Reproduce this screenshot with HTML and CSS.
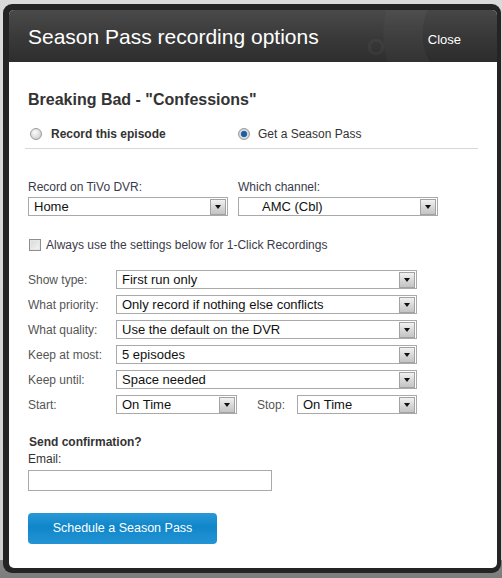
FILE: index.html
```html
<!DOCTYPE html>
<html>
<head>
<meta charset="utf-8">
<link rel="stylesheet" href="styles.css">
</head>
<body>
<div class="frame">
  <div class="dialog">
    <div class="header">
      <div class="title">Season Pass recording options</div>
      <div class="close">Close</div>
    </div>
    <div class="content">
      <h2 class="show">Breaking Bad - "Confessions"</h2>
      <div class="opts">
        <div class="opt opt1"><span class="radio"></span><span class="opt-label bold">Record this episode</span></div>
        <div class="opt"><span class="radio checked"></span><span class="opt-label">Get a Season Pass</span></div>
      </div>
      <div class="sep"></div>
      <div class="dvr">
        <div class="field">
          <div class="flabel">Record on TiVo DVR:</div>
          <div class="sel"><span class="sel-text">Home</span><span class="arrow"></span></div>
        </div>
        <div class="field">
          <div class="flabel">Which channel:</div>
          <div class="sel"><span class="sel-text indent">AMC (Cbl)</span><span class="arrow"></span></div>
        </div>
      </div>
      <div class="check-row"><span class="checkbox"></span><span class="check-label">Always use the settings below for 1-Click Recordings</span></div>
      <div class="form">
        <div class="rlabel">Show type:</div>
        <div class="sel"><span class="sel-text">First run only</span><span class="arrow"></span></div>
        <div class="rlabel">What priority:</div>
        <div class="sel"><span class="sel-text">Only record if nothing else conflicts</span><span class="arrow"></span></div>
        <div class="rlabel">What quality:</div>
        <div class="sel"><span class="sel-text">Use the default on the DVR</span><span class="arrow"></span></div>
        <div class="rlabel">Keep at most:</div>
        <div class="sel"><span class="sel-text">5 episodes</span><span class="arrow"></span></div>
        <div class="rlabel">Keep until:</div>
        <div class="sel"><span class="sel-text">Space needed</span><span class="arrow"></span></div>
        <div class="rlabel">Start:</div>
        <div class="startstop">
          <div class="sel small"><span class="sel-text">On Time</span><span class="arrow"></span></div>
          <div class="stop-label">Stop:</div>
          <div class="sel small2"><span class="sel-text">On Time</span><span class="arrow"></span></div>
        </div>
      </div>
      <div class="confirm">Send confirmation?</div>
      <div class="email-label">Email:</div>
      <div class="email"></div>
      <div class="button">Schedule a Season Pass</div>
    </div>
  </div>
</div>
</body>
</html>
```

FILE: styles.css
```css
html, body {
  margin: 0;
  padding: 0;
}
body {
  width: 502px;
  height: 578px;
  overflow: hidden;
  background: linear-gradient(#dadada 0, #d2d2d2 560px, #858585 560px, #7d7d7d 578px);
  font-family: "Liberation Sans", Arial, sans-serif;
}
.frame {
  box-sizing: border-box;
  width: 498px;
  height: 569px;
  margin: 4px 0 0 3px;
  background: #242424;
  border-radius: 9px;
  padding: 6px 4px 5px 6px;
}
.dialog {
  height: 100%;
  background: #fff;
  border-radius: 5px;
  overflow: hidden;
}
.header {
  box-sizing: border-box;
  height: 52px;
  padding: 2px 36px 0 19px;
  display: flex;
  align-items: center;
  justify-content: space-between;
  background:
    radial-gradient(circle at 367px 37px, transparent 0 5px, rgba(255,255,255,0.035) 5.5px 8px, transparent 8.5px),
    radial-gradient(circle at 470px 24px, rgba(0,0,0,0.04) 0 56px, rgba(255,255,255,0.025) 57px 95px, transparent 96px),
    linear-gradient(#4a4a4a, #3a3a3a 50%, #2e2e2e);
}
.title {
  color: #fff;
  font-size: 21px;
  line-height: 24px;
}
.close {
  color: #fff;
  font-size: 13px;
  line-height: 15px;
  margin-top: 5px;
}
.content {
  padding: 0 0 0 19px;
}
.show {
  margin: 29px 0 0 0;
  font-size: 16px;
  line-height: 18px;
  font-weight: bold;
  color: #333;
}
.opts {
  margin-top: 18px;
  display: flex;
  height: 14px;
  font-size: 12px;
  line-height: 14px;
  color: #333;
}
.opt {
  display: flex;
  align-items: center;
}
.opt1 {
  width: 208px;
  padding-left: 2px;
}
.bold {
  font-weight: bold;
}
.radio {
  box-sizing: border-box;
  width: 12px;
  height: 12px;
  border-radius: 50%;
  border: 1px solid #9a9a9a;
  background: radial-gradient(circle at 40% 35%, #fbfbfb, #d4d4d4 70%, #c4c4c4);
  margin-right: 9px;
}
.radio.checked {
  background: radial-gradient(circle at 50% 50%, #1d5f9e 0 2.4px, #3c7fc0 3px, #dcdcdc 3.6px, #c6c6c6 100%);
}
.opt:not(.opt1) .radio {
  margin-right: 8px;
}
.sep {
  margin: 7px 0 0 -3px;
  width: 453px;
  height: 1px;
  background: #d8d8d8;
}
.dvr {
  margin-top: 31px;
  display: grid;
  grid-template-columns: 200px 200px;
  column-gap: 10px;
}
.flabel {
  font-size: 12px;
  line-height: 14px;
  color: #3a3a4a;
  margin-bottom: 3px;
}
.sel {
  box-sizing: border-box;
  height: 19px;
  border: 1px solid #a9a9a9;
  background: #fff;
  display: flex;
  align-items: center;
  justify-content: space-between;
  padding: 0 1px 0 5px;
}
.sel-text {
  font-size: 13px;
  line-height: 15px;
  color: #111;
  white-space: nowrap;
}
.sel-text.indent {
  padding-left: 18px;
}
.arrow {
  box-sizing: border-box;
  width: 16px;
  height: 16px;
  border: 1px solid #a2a2a2;
  background: linear-gradient(#f2f2f2, #d6d6d6 55%, #c4c4c4);
  display: flex;
  align-items: center;
  justify-content: center;
}
.arrow::after {
  content: "";
  width: 0;
  height: 0;
  border-left: 3.5px solid transparent;
  border-right: 3.5px solid transparent;
  border-top: 4px solid #111;
  margin-top: 1px;
}
.check-row {
  margin-top: 22px;
  display: flex;
  align-items: center;
  height: 14px;
  padding-left: 1px;
}
.checkbox {
  box-sizing: border-box;
  width: 12px;
  height: 12px;
  border: 1px solid #8e8e8e;
  background: linear-gradient(135deg, #d8d8d8, #f4f4f4);
  box-shadow: inset 0 0 0 1px #e6e6e6;
  margin-right: 5px;
}
.check-label {
  font-size: 12px;
  line-height: 14px;
  color: #3a3a4a;
}
.form {
  margin-top: 18px;
  display: grid;
  grid-template-columns: 88px 301px;
  grid-auto-rows: 19px;
  row-gap: 6px;
  align-items: center;
}
.rlabel {
  font-size: 12px;
  line-height: 14px;
  color: #555;
  padding-top: 1px;
}
.startstop {
  display: flex;
  align-items: center;
}
.sel.small {
  width: 121px;
}
.stop-label {
  width: 40px;
  margin-left: 20px;
  font-size: 12px;
  line-height: 14px;
  color: #555;
  padding-top: 1px;
}
.sel.small2 {
  width: 120px;
}
.confirm {
  margin-top: 21px;
  font-size: 12px;
  line-height: 14px;
  font-weight: bold;
  color: #333;
  padding-left: 1px;
}
.email-label {
  margin-top: 3px;
  font-size: 12px;
  line-height: 14px;
  color: #333;
}
.email {
  box-sizing: border-box;
  margin-top: 4px;
  width: 244px;
  height: 21px;
  border: 1px solid #a9a9a9;
  background: #fff;
}
.button {
  box-sizing: border-box;
  margin-top: 22px;
  width: 189px;
  height: 31px;
  border-radius: 4px;
  background: linear-gradient(#2a98d6, #0e86c9 45%, #1a8dcf 70%, #2394d4);
  color: #fff;
  font-size: 12.5px;
  line-height: 31px;
  text-align: center;
}
```
